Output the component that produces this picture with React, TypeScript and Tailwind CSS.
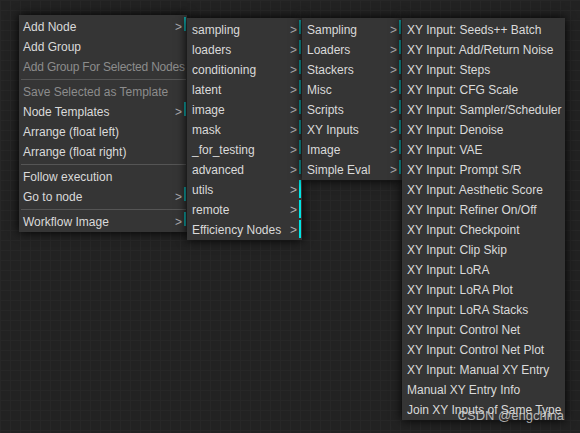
import React from "react";

type Entry =
  | { kind: "item"; label: string; sub?: boolean; disabled?: boolean; dark?: boolean; tight?: boolean }
  | { kind: "sep" };

const menu1: Entry[] = [
  { kind: "item", label: "Add Node", sub: true, dark: true },
  { kind: "item", label: "Add Group" },
  { kind: "item", label: "Add Group For Selected Nodes", disabled: true, tight: true },
  { kind: "sep" },
  { kind: "item", label: "Save Selected as Template", disabled: true },
  { kind: "item", label: "Node Templates", sub: true, dark: true },
  { kind: "item", label: "Arrange (float left)" },
  { kind: "item", label: "Arrange (float right)" },
  { kind: "sep" },
  { kind: "item", label: "Follow execution" },
  { kind: "item", label: "Go to node", sub: true, dark: true },
  { kind: "sep" },
  { kind: "item", label: "Workflow Image", sub: true, dark: true },
];

const menu2: Entry[] = [
  "sampling",
  "loaders",
  "conditioning",
  "latent",
  "image",
  "mask",
  "_for_testing",
  "advanced",
].map((l) => ({ kind: "item" as const, label: l, sub: true, dark: true }));
menu2.push(
  { kind: "item", label: "utils", sub: true },
  { kind: "item", label: "remote", sub: true },
  { kind: "item", label: "Efficiency Nodes", sub: true }
);

const menu3: Entry[] = [
  "Sampling",
  "Loaders",
  "Stackers",
  "Misc",
  "Scripts",
  "XY Inputs",
  "Image",
  "Simple Eval",
].map((l) => ({ kind: "item" as const, label: l, sub: true, dark: true }));

const menu4: Entry[] = [
  "XY Input: Seeds++ Batch",
  "XY Input: Add/Return Noise",
  "XY Input: Steps",
  "XY Input: CFG Scale",
  "XY Input: Sampler/Scheduler",
  "XY Input: Denoise",
  "XY Input: VAE",
  "XY Input: Prompt S/R",
  "XY Input: Aesthetic Score",
  "XY Input: Refiner On/Off",
  "XY Input: Checkpoint",
  "XY Input: Clip Skip",
  "XY Input: LoRA",
  "XY Input: LoRA Plot",
  "XY Input: LoRA Stacks",
  "XY Input: Control Net",
  "XY Input: Control Net Plot",
  "XY Input: Manual XY Entry",
  "Manual XY Entry Info",
  "Join XY Inputs of Same Type",
].map((l) => ({ kind: "item" as const, label: l }));

function Menu({
  entries,
  className,
  textPad,
}: {
  entries: Entry[];
  className: string;
  textPad: string;
}) {
  return (
    <div
      className={
        "absolute flex flex-col gap-[2px] py-[2px] pl-[2px] pr-[1px] bg-[#353535] shadow-[0_0_10px_black] " +
        className
      }
    >
      {entries.map((e, i) =>
        e.kind === "sep" ? (
          <div key={i} className="h-[3px] border-b border-[#555555]" />
        ) : (
          <div
            key={i}
            className={
              "relative h-[18px] leading-[20px] whitespace-nowrap text-[12px] " +
              textPad +
              (e.tight ? " tracking-[-0.2px]" : "") +
              (e.disabled ? " text-[#8c8c8c]" : " text-[#dadada]")
            }
          >
            {e.label}
            {e.sub && (
              <>
                <span className="absolute right-[4px] top-0 text-[#b0b0b0]">&gt;</span>
                {e.dark ? (
                  <span className="absolute right-0 top-0 w-[2px] h-[14px] bg-[#12a6a6]" />
                ) : (
                  <span className="absolute right-0 top-0 w-[2px] h-[18px] bg-[#00e6e6]" />
                )}
              </>
            )}
          </div>
        )
      )}
    </div>
  );
}

export default function App() {
  return (
    <div
      className="relative w-[580px] h-[433px] overflow-hidden bg-[#222222] bg-[linear-gradient(to_right,#272727_1px,transparent_1px),linear-gradient(to_bottom,#272727_1px,transparent_1px)] bg-size-[10px_10px]"
      style={{ fontFamily: '"Liberation Sans", Arial, sans-serif' }}
    >
      <Menu entries={menu1} className="left-[19px] top-[15px] w-[168px]" textPad="pl-[2px]" />
      <Menu entries={menu2} className="left-[187px] top-[18px] w-[115px]" textPad="pl-[3px]" />
      <Menu entries={menu3} className="left-[302px] top-[18px] w-[100px]" textPad="pl-[3px]" />
      <Menu entries={menu4} className="left-[402px] top-[18px] w-[163px]" textPad="pl-[3px]" />
      <div className="absolute right-[16px] top-[408px] text-[13px] leading-[16px] text-[#d8d8d8]/80 whitespace-nowrap">
        CSDN @engchina
      </div>
    </div>
  );
}
